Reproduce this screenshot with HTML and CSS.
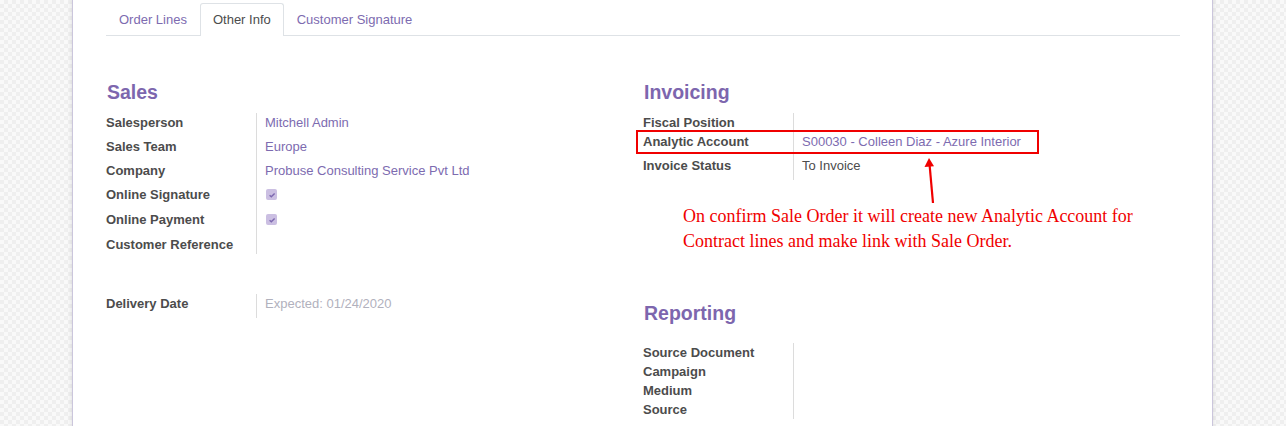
FILE: index.html
```html
<!DOCTYPE html>
<html>
<head>
<meta charset="utf-8">
<link rel="stylesheet" href="styles.css">
</head>
<body>
<div class="sheet">
  <div class="tabs">
    <div class="tab">Order Lines</div>
    <div class="tab active">Other Info</div>
    <div class="tab">Customer Signature</div>
  </div>
  <div class="groups">
    <div class="col">
      <div class="heading">Sales</div>
      <div class="row gap"><div class="lbl">Salesperson</div><div class="val link">Mitchell Admin</div></div>
      <div class="row gap"><div class="lbl">Sales Team</div><div class="val link">Europe</div></div>
      <div class="row gap"><div class="lbl">Company</div><div class="val link">Probuse Consulting Service Pvt Ltd</div></div>
      <div class="row gap tall"><div class="lbl">Online Signature</div><div class="val"><span class="check"><svg viewBox="0 0 10 10" width="10" height="10"><path d="M2.6 5.2 L4.3 6.8 L7.6 3.4" fill="none" stroke="#7d68b0" stroke-width="1.4"/></svg></span></div></div>
      <div class="row gap tall"><div class="lbl">Online Payment</div><div class="val"><span class="check"><svg viewBox="0 0 10 10" width="10" height="10"><path d="M2.6 5.2 L4.3 6.8 L7.6 3.4" fill="none" stroke="#7d68b0" stroke-width="1.4"/></svg></span></div></div>
      <div class="row"><div class="lbl">Customer Reference</div><div class="val"></div></div>
      <div class="row gap delivery"><div class="lbl">Delivery Date</div><div class="val muted">Expected: 01/24/2020</div></div>
    </div>
    <div class="col">
      <div class="heading">Invoicing</div>
      <div class="row"><div class="lbl">Fiscal Position</div><div class="val"></div></div>
      <div class="row gap marked"><div class="lbl">Analytic Account</div><div class="val link">S00030 - Colleen Diaz - Azure Interior</div>
        <svg class="arrow" width="20" height="52" viewBox="0 0 20 52"><path d="M9.6 9 L13 47" stroke="#f00000" stroke-width="2.2" fill="none"/><path d="M9 2 L4.5 11 L14 10.2 Z" fill="#f00000"/></svg>
      </div>
      <div class="row gap"><div class="lbl">Invoice Status</div><div class="val">To Invoice</div></div>
      <p class="note">On confirm Sale Order it will create new Analytic Account for Contract lines and make link with Sale Order.</p>
      <div class="heading reporting">Reporting</div>
      <div class="row"><div class="lbl">Source Document</div><div class="val"></div></div>
      <div class="row"><div class="lbl">Campaign</div><div class="val"></div></div>
      <div class="row"><div class="lbl">Medium</div><div class="val"></div></div>
      <div class="row"><div class="lbl">Source</div><div class="val"></div></div>
    </div>
  </div>
</div>
</body>
</html>
```

FILE: styles.css
```css
html, body {
  margin: 0;
  padding: 0;
}
body {
  width: 1286px;
  height: 426px;
  overflow: hidden;
  font-family: "Liberation Sans", Arial, sans-serif;
  font-size: 13px;
  color: #4c4c4c;
  background-color: #f9f9f9;
  background-image: conic-gradient(#efefef 25%, #f9f9f9 0 50%, #efefef 0 75%, #f9f9f9 0);
  background-size: 8px 8px;
}
.sheet {
  box-sizing: border-box;
  margin-left: 72px;
  width: 1141px;
  min-height: 426px;
  background: #fff;
  border-left: 1px solid #cbc6dc;
  border-right: 1px solid #cbc6dc;
  box-shadow: 0 0 5px rgba(0, 0, 0, 0.12);
  padding: 3px 32px 0 33px;
}
.tabs {
  display: flex;
  border-bottom: 1px solid #dee2e6;
  height: 32px;
}
.tab {
  box-sizing: border-box;
  height: 33px;
  padding: 0 12px;
  line-height: 32px;
  color: #7d6bb0;
  border: 1px solid transparent;
  border-bottom: none;
}
.tab.active {
  color: #4c4c4c;
  background: #fff;
  border-color: #dee2e6;
  border-radius: 3px 3px 0 0;
}
.groups {
  display: grid;
  grid-template-columns: 1fr 1fr;
  margin-top: 44px;
}
.heading {
  height: 24px;
  line-height: 24px;
  font-size: 19.5px;
  font-weight: bold;
  color: #7d66ae;
  padding-left: 1px;
  margin-bottom: 9px;
}
.heading.reporting {
  margin-top: 47px;
  margin-bottom: 18px;
}
.row {
  position: relative;
  display: grid;
  grid-template-columns: 150px 1fr;
  line-height: 19px;
}
.row.gap > div {
  padding-bottom: 5px;
}
.row.tall > div {
  padding-bottom: 6px;
}
.lbl {
  font-weight: bold;
  color: #4c4c4c;
}
.val {
  border-left: 1px solid #dcdcdc;
  padding-left: 8px;
  min-height: 19px;
}
.link {
  color: #7d6bb0;
}
.muted {
  color: #b1b1bd;
}
.delivery {
  margin-top: 40px;
}
.check {
  display: inline-block;
  width: 11px;
  height: 11px;
  margin-top: 4px;
  margin-left: 1px;
  border-radius: 2px;
  background: #cbbfe2;
  vertical-align: top;
  position: relative;
}
.check svg {
  position: absolute;
  left: 0.5px;
  top: 0.5px;
}
.marked::after {
  content: "";
  position: absolute;
  left: -7px;
  top: -2px;
  width: 399px;
  height: 20px;
  border: 2px solid #f00000;
}
.arrow {
  position: absolute;
  left: 277px;
  top: 24px;
}
.note {
  margin: 24px 0 0 40px;
  font-family: "Liberation Serif", "Times New Roman", serif;
  font-size: 18px;
  line-height: 25px;
  color: #f00000;
  width: 470px;
}
```
